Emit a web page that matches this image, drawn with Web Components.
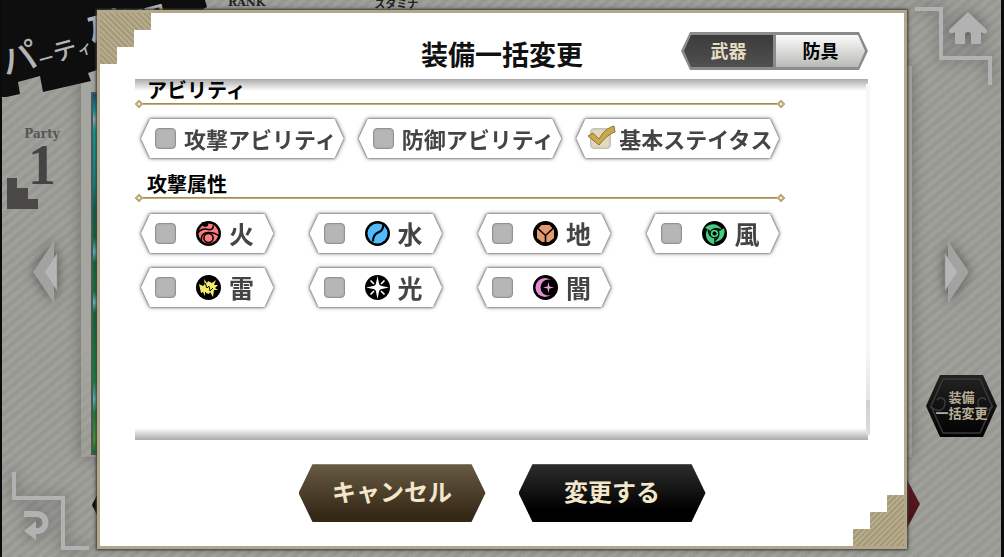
<!DOCTYPE html>
<html lang="ja">
<head>
<meta charset="utf-8">
<meta name="viewport" content="width=device-width, initial-scale=1">
<title>装備一括変更</title>
<style>
  html, body { margin: 0; min-height: 100%; }
  body { background: #0b0b0b; font-family: "Noto Sans CJK JP", "Noto Sans", sans-serif; font-weight: 700; color: #000; }
</style>
</head>
<body>
<party-screen>
  <gear-dialog slot="dialog">
    <span slot="title">装備一括変更</span>
    <mode-toggle slot="mode"></mode-toggle>
    <filter-section columns="3" heading="アビリティ">
      <filter-chip>攻撃アビリティ</filter-chip>
      <filter-chip>防御アビリティ</filter-chip>
      <filter-chip checked>基本ステイタス</filter-chip>
    </filter-section>
    <filter-section columns="4" heading="攻撃属性">
      <filter-chip element="fire">火</filter-chip>
      <filter-chip element="water">水</filter-chip>
      <filter-chip element="earth">地</filter-chip>
      <filter-chip element="wind">風</filter-chip>
      <filter-chip element="thunder">雷</filter-chip>
      <filter-chip element="light">光</filter-chip>
      <filter-chip element="dark">闇</filter-chip>
    </filter-section>
    <hex-button slot="actions" tone="bronze">キャンセル</hex-button>
    <hex-button slot="actions">変更する</hex-button>
  </gear-dialog>
</party-screen>

<script>
const define = (name, html, setup) => {
  const tpl = document.createElement('template');
  tpl.innerHTML = html;
  customElements.define(name, class extends HTMLElement {
    constructor() {
      super();
      this.attachShadow({ mode: 'open' }).append(tpl.content.cloneNode(true));
    }
    connectedCallback() { if (setup) setup(this, this.shadowRoot); }
  });
};

const blade = '<path d="M3 7C8 1.500 16.500 2 20 9c-3-2-6-2.500-9-1.500 3 0 5 1 6.500 2.500-3-1.500-6-1.500-8.500.5C6.500 8.500 5 7.500 3 7z"/>';
const ICONS = {
  fire: `<circle cx="12.500" cy="12.500" r="10" fill="#ff7b80"/>
    <path d="M6 1c-1 4 2 5.500 5 4.500C12.500 5 12.500 3 12 1z"/>
    <path d="M2 12c2-4 7-4.500 10-3.500 4 .5 5.500-1 5-4" fill="none" stroke="#000" stroke-width="1.600"/>
    <path d="M6 22c-2-7 1-10.500 6.500-10.500 5 0 8.500 1.500 11 4" fill="none" stroke="#000" stroke-width="1.600"/>
    <circle cx="12.500" cy="17" r="4.600" fill="#ff7b80" stroke="#000" stroke-width="1.600"/>`,
  water: `<circle cx="12.500" cy="12.500" r="10" fill="#4fbcff"/><path d="M18.500 4c-1 5-2 6-5.500 7.500S8 15 8 20.500" fill="none" stroke="#000" stroke-width="2.200"/>`,
  earth: `<path fill="#e39a70" d="M8.500 4h8L21 9v8l-5 4H9l-5-4V9z"/><path d="M5 7.500l7.500 7 7.500-7M12.500 14.500V22" fill="none" stroke="#000" stroke-width="1.600"/>`,
  wind: `<g fill="#45cc80">${[0, 120, 240].map(a => `<g transform="rotate(${a} 12.500 12.500)">${blade}</g>`).join('')}</g>
    <circle cx="12.500" cy="12.500" r="4.400" fill="#45cc80" stroke="#000" stroke-width="1.200"/><circle cx="12.500" cy="12.500" r="2"/>`,
  thunder: `<path fill="#f3ea6c" d="M8 4l3 4 1-2 4 2 4-3-2 5 4 0-3 3 3 2-4 0-1 7-3-5-1 2-3-1z"/><path fill="#f3ea6c" d="M3 9l4 2 2-2 1 5 2-2 0 5-3 0 0 4-2-4-2 1z"/>
    <path d="M9 8l2 5 2-2 1 5 3-3" fill="none" stroke="#000" stroke-width="1"/>`,
  light: `<path fill="#fff" d="M12.500 1l1.700 8.300 1.500 1.500 8.300 1.700-8.300 1.700-1.500 1.500L12.500 24l-1.700-8.300-1.500-1.500L1 12.500l8.300-1.700 1.500-1.500z"/>
    <path d="M5.500 5.500L9 9M19.500 5.500L16 9M5.500 19.500L9 16M19.500 19.500L16 16" stroke="#fff" stroke-width="1.600"/>`,
  dark: `<circle cx="12" cy="12.500" r="9.500" fill="#e88bd8"/><circle cx="15.500" cy="12.500" r="8" fill="#000"/>
    <path fill="#f09be0" d="M15.500 7l1 4.500 4.500 1-4.500 1-1 4.500-1-4.500-4.500-1 4.500-1z"/>`
};

define('element-icon', `
  <style>
    :host { display: block; width: 25px; height: 25px; flex: none; }
    svg { display: block; width: 100%; height: 100%; }
  </style>
  <svg viewBox="0 0 25 25" aria-hidden="true"></svg>`,
  (host, root) => {
    root.querySelector('svg').innerHTML = '<circle cx="12.500" cy="12.500" r="12.500"/>' + ICONS[host.getAttribute('name')];
  });

define('filter-chip', `
  <style>
    :host { display: block; min-width: 0; filter: drop-shadow(0 0 1px #555) drop-shadow(0 0 2px #888); }
    label {
      display: flex; align-items: center; gap: 8px; height: 39px; padding-left: 14px; box-sizing: border-box;
      background: #fff; color: #444; font-size: 22px; line-height: 32px; white-space: nowrap; cursor: pointer;
      clip-path: polygon(0 50%, 9px 0, calc(100% - 9px) 0, 100% 50%, calc(100% - 9px) 100%, 9px 100%);
    }
    .box { position: relative; flex: none; width: 21px; height: 21px; }
    .text { padding-bottom: 2px; }
    input {
      appearance: none; display: block; width: 21px; height: 21px; margin: 0; box-sizing: border-box;
      background: #b6b6b6; border: 1px solid #929292; border-radius: 4px; box-shadow: inset 0 0 2px #999;
    }
    input:checked { background: #e2d9c2; border-color: #c6c0b2; box-shadow: inset 0 0 2px #bbb09a; }
    svg { position: absolute; left: -3px; top: -3px; width: 29px; height: 24px; display: none; pointer-events: none; }
    input:checked + svg { display: block; }
    element-icon { margin-left: 12px; }
    :host([element]) label { font-size: 25px; }
  </style>
  <label>
    <span class="box">
      <input type="checkbox">
      <svg viewBox="0 0 29 24" aria-hidden="true"><path d="M1 11l5-3 6 6C16 7 20 3 27 1l1 6c-6 2-10 6-16 13z" fill="#c9a94c" stroke="#8d7434" stroke-width="1"/></svg>
    </span>
    <span class="text"><slot></slot></span>
  </label>`,
  (host, root) => {
    root.querySelector('input').checked = host.hasAttribute('checked');
    if (host.hasAttribute('element') && !root.querySelector('element-icon')) {
      const icon = document.createElement('element-icon');
      icon.setAttribute('name', host.getAttribute('element'));
      root.querySelector('.box').after(icon);
    }
  });

define('filter-section', `
  <style>
    :host { display: block; }
    h2 { margin: 0; padding-left: 12px; font-size: 20px; line-height: 22px; font-weight: 700; }
    .rule { display: flex; align-items: center; height: 6px; }
    .rule::before, .rule::after {
      content: ""; width: 6px; height: 6px; box-sizing: border-box; border: 1px solid #a38c4b; rotate: 45deg;
      background: #fff; box-shadow: inset 0 0 0 1px #b9a468; margin: 0 1px;
    }
    .rule i { flex: 1; height: 2px; background: linear-gradient(#a38c4b 50%, #bfae7e 50%); }
    .grid { display: grid; margin: 12px 6px 15px; row-gap: 15px; }
    :host([columns="3"]) .grid { grid-template-columns: repeat(3, 1fr); column-gap: 15px; }
    :host([columns="4"]) .grid { grid-template-columns: repeat(4, 1fr); column-gap: 36px; margin-top: 13px; }
  </style>
  <section>
    <h2></h2>
    <div class="rule"><i></i></div>
    <div class="grid"><slot></slot></div>
  </section>`,
  (host, root) => { root.querySelector('h2').textContent = host.getAttribute('heading'); });

define('mode-toggle', `
  <style>
    :host {
      display: flex; width: 187px; height: 38px; padding: 3px; box-sizing: border-box; gap: 3px; background: #8b8b8b;
      clip-path: polygon(0 50%, 9px 0, calc(100% - 9px) 0, 100% 50%, calc(100% - 9px) 100%, 9px 100%);
    }
    button { flex: 1; border: 0; padding: 0 0 2px; margin: 0; font: inherit; font-size: 18px; line-height: 30px; color: #000; cursor: pointer;
      background: linear-gradient(#fbfbfb, #b9b9b6);
      clip-path: polygon(0 0, calc(100% - 7px) 0, 100% 50%, calc(100% - 7px) 100%, 0 100%); }
    button[aria-pressed="true"] { background: linear-gradient(#3b3b3b, #505050); color: #e6dcc4;
      clip-path: polygon(0 50%, 7px 0, 100% 0, 100% 100%, 7px 100%); }
  </style>
  <button type="button" aria-pressed="true">武器</button>
  <button type="button" aria-pressed="false">防具</button>`);

define('hex-button', `
  <style>
    :host { display: block; width: 187px; }
    button {
      display: block; width: 100%; height: 58px; padding: 0 0 4px; border: 0; font: inherit; font-size: 24px; line-height: 36px;
      color: #f3e7cb; cursor: pointer; background: linear-gradient(#555 0 1px, #2c2c2c 1px, #000 80%);
      clip-path: polygon(0 50%, 14px 0, calc(100% - 14px) 0, 100% 50%, calc(100% - 14px) 100%, 14px 100%);
    }
    :host([tone="bronze"]) button { background: linear-gradient(#8b8168 0 1px, #665a44 1px, #352816 90%); }
  </style>
  <button type="button"><slot></slot></button>`);

define('gear-dialog', `
  <style>
    :host { display: block; }
    .frame {
      position: relative; display: flex; flex-direction: column; box-sizing: border-box; min-height: calc(100vh - 18px);
      background: #fff; border: 3px solid #b3a689; box-shadow: 0 0 2px 1px #444, 0 0 6px rgba(0,0,0,.4);
    }
    .stairs { position: absolute; width: 51px; height: 51px;
      background: repeating-linear-gradient(135deg, #b6ab8c 0 2px, #a59a78 2px 4px); }
    .tl { left: 0; top: 0; background: repeating-linear-gradient(45deg, #b6ab8c 0 2px, #a59a78 2px 4px);
      clip-path: polygon(0 0, 100% 0, 100% 17px, 34px 17px, 34px 34px, 17px 34px, 17px 100%, 0 100%); }
    .br { right: 0; bottom: 0; clip-path: polygon(100% 100%, 0 100%, 0 34px, 17px 34px, 17px 17px, 34px 17px, 34px 0, 100% 0); }
    header { display: grid; grid-template-columns: 1fr auto 1fr; padding: 19px 36px 8px; height: 39px; }
    h1 { grid-column: 2; align-self: end; margin: 0; font-size: 27px; line-height: 34px; font-weight: 700; color: #111; }
    .mode { justify-self: end; }
    .scroller { position: relative; z-index: 0; flex: 1; margin: 0 36px 0 35px; box-sizing: border-box; }
    .scroller::before, .scroller::after { content: ""; position: absolute; left: 0; right: 0; height: 12px; z-index: -1; }
    .scroller::before { top: 0; background: linear-gradient(#aaa, #fff); }
    .scroller::after { bottom: 0; background: linear-gradient(#fff, #aaa); }
    .list { display: block; margin-right: 83px; }
    .bar { position: absolute; right: -2px; top: 5px; bottom: 5px; width: 4px;
      background: linear-gradient(#f7f7f7 76%, #e4e4e4 90%, #d0d0d0 90%, #ddd); }
    footer { display: flex; justify-content: center; gap: 33px; padding: 24px 0; }
  </style>
  <div class="frame" role="dialog" aria-labelledby="t">
    <div class="stairs tl"></div>
    <div class="stairs br"></div>
    <header><h1 id="t"><slot name="title"></slot></h1><div class="mode"><slot name="mode"></slot></div></header>
    <div class="scroller"><div class="list"><slot></slot></div><div class="bar"></div></div>
    <footer><slot name="actions"></slot></footer>
  </div>`);

define('page-arrow', `
  <style>
    :host { display: block; width: 26px; height: 62px; }
    button { display: block; padding: 0; border: 0; background: none; cursor: pointer; }
    svg { display: block; width: 26px; height: 62px; overflow: visible; filter: drop-shadow(0 0 6px rgba(0,0,0,.5)); }
    :host([dir="rtl"]) svg { rotate: 180deg; }
  </style>
  <button type="button" aria-label="ページ送り"><svg viewBox="0 0 26 62"><path d="M4 0l21 31L4 62z" fill="#a2a2a0"/><path d="M1 12.500l13 18.500L1 49.500z" fill="#b6b6b6" stroke="#959593" stroke-width=".6"/></svg></button>`);

define('corner-link', `
  <style>
    :host { display: block; width: 78px; height: 78px; }
    a { display: block; }
    svg { display: block; width: 78px; height: 78px; overflow: visible; filter: drop-shadow(0 0 7px rgba(0,0,0,.4)); }
  </style>
  <a href="#"><svg viewBox="0 0 78 78"></svg></a>`,
  (host, root) => {
    const home = host.getAttribute('kind') === 'home';
    root.querySelector('a').setAttribute('aria-label', home ? 'ホーム' : '戻る');
    root.querySelector('svg').innerHTML = home
      ? '<path d="M0 2h26v49h49v27" fill="none" stroke="#b2b2b2" stroke-width="4"/><path d="M53 5l18 17q2 2 0 4-2 1-5-1v12H56v-9a3 3 0 0 0-6 0v9H40V25q-3 2-5 1-2-2 0-4z" fill="#b2b2b2"/>'
      : '<path d="M2 0v26h49v50h26" fill="none" stroke="#b2b2b2" stroke-width="4"/><path d="M12 42h13a8 8 0 0 1 0 17h-4" fill="none" stroke="#b2b2b2" stroke-width="6"/><path d="M12 59l12-10v19z" fill="#b2b2b2"/>';
  });

define('batch-button', `
  <style>
    :host { display: block; width: 71px; }
    button {
      position: relative; z-index: 0; display: block; width: 71px; height: 62px; padding: 0 0 2px; border: 0; font: inherit; cursor: pointer;
      font-size: 13px; line-height: 16px; color: #b9ae98; background: none; white-space: nowrap;
    }
    svg { position: absolute; inset: 0; width: 71px; height: 62px; z-index: -1; }
  </style>
  <button type="button">
    <svg viewBox="0 0 71 62" aria-hidden="true">
      <defs><linearGradient id="g" x2="0" y2="1"><stop stop-color="#222"/><stop offset="1" stop-color="#020202"/></linearGradient></defs>
      <path d="M0 31L14 0h43l14 31-14 31H14z" fill="url(#g)"/>
      <path d="M5 31L17 4h37l12 27-12 27H17z" fill="none" stroke="#393939" stroke-width="1.500"/>
      <path d="M4 31c8 8 14 4 15-2s-5-8-8-4M67 31c-8 8-14 4-15-2s5-8 8-4" fill="none" stroke="#3b3b3b" stroke-width="1.500"/>
    </svg>装備<br>一括変更
  </button>`);

define('party-screen', `
  <style>
    :host { display: block; }
    .stage {
      position: relative; display: grid; grid-template-columns: 95px 1fr 94px; min-height: 100vh; box-sizing: border-box;
      border: solid #0b0b0d; border-width: 0 3px 0 2px; overflow: hidden;
      background: repeating-linear-gradient(140deg, #a0a09a 0 4px, #989893 4px 8px);
    }
    .rail { position: relative; z-index: 1; display: flex; flex-direction: column; box-sizing: border-box; }
    .left { align-items: flex-start; padding: 126px 0 7px 10px; }
    .right { align-items: flex-start; padding: 7px 0 0 8px; }
    .party { width: 60px; height: 63px; text-align: center; color: #555; font-family: "DejaVu Serif", serif; font-size: 12px; line-height: 17px; font-weight: 700; }
    .party b { display: block; font: 700 56px/44px "Liberation Serif", serif; color: #444; }
    .steps { position: absolute; left: 5px; top: 178px; width: 31px; height: 31px; background: #4b4947;
      clip-path: polygon(0 0, 10px 0, 10px 10px, 21px 10px, 21px 21px, 31px 21px, 31px 31px, 0 31px); }
    .left page-arrow { margin: 52px 0 0 20px; }
    .left corner-link { margin-top: auto; }
    .right page-arrow { margin: 156px 0 0 29px; }
    .right batch-button { margin: 72px 0 0 11px; }
    .panel { margin: 66px -5px 100px -16px; background: linear-gradient(#a6a6a1 70%, transparent);
      box-shadow: 0 0 14px rgba(0,0,0,.3); padding: 26px 10px 0; }
    .art { height: 359px; border: 2px solid #555; box-sizing: content-box;
      background: linear-gradient(#0a4f86, #0aa6a0 5%, #9ab 7%, #0aa6a0 10%, #0a8f88 25%, #066b50 32%, #06733a 40%, #5bc0c4 44%, #06733a 47%, #08803e 55%, #6cc4c0 58%, #06733a 61%, #0a8f46 80%, #5bb8b8 85%, #108a3c 89%, #4a9a35 96%, #0c7a30); }
    .stats { position: absolute; left: 226px; right: 0; top: -5px; display: flex; gap: 109px; font-size: 11px; line-height: 16px; color: #222; }
    .stats span:first-child { font-family: "DejaVu Serif", serif; }
    .banner { position: absolute; left: 0; top: 0; width: 206px; height: 97px; z-index: 2; }
    .banner svg { display: block; width: 206px; height: 97px; }
    .banner p { position: absolute; left: 7px; top: 34px; margin: 0; display: flex; align-items: baseline; rotate: -15deg;
      transform-origin: 0 100%; color: #b4b4b4; line-height: 44px; white-space: nowrap; font-weight: 500; }
    .l { font-size: 36px; } .m { font-size: 24px; } .s { font-size: 16px; } .x { font-size: 44px; }
    .gem { position: absolute; z-index: 2; }
    .gem.dark { left: 90px; bottom: 42px; width: 10px; height: 20px; background: #0c0c0c; clip-path: polygon(0 50%, 50% 0, 50% 100%); }
    .gem.red { right: 81px; bottom: 25px; width: 15px; height: 56px; background: linear-gradient(#5c1c24, #4a1219); clip-path: polygon(0 0, 100% 50%, 0 100%); }
    .over { position: absolute; z-index: 3; inset: 10px 94px auto 95px; }
  </style>
  <div class="stage">
    <div class="rail left">
      <div class="party">Party<b>1</b></div>
      <div class="steps"></div>
      <page-arrow dir="rtl"></page-arrow>
      <corner-link kind="back"></corner-link>
    </div>
    <div class="panel"><div class="art"></div></div>
    <div class="rail right">
      <corner-link kind="home"></corner-link>
      <page-arrow></page-arrow>
      <batch-button></batch-button>
    </div>
    <div class="stats"><span>RANK</span><span>スタミナ</span></div>
    <div class="banner">
      <svg viewBox="0 0 206 97" aria-hidden="true"><path d="M0 0h203l2 7-110 63-9 3 3 8-48 11-3-16-22 6 2 12-18 4z" fill="#0e0e0e"/></svg>
      <p><span class="l">パ</span><span class="s">ー</span><span class="m">テ</span><span class="s">ィ</span><span class="x">確</span><span class="l">認</span></p>
    </div>
    <div class="gem dark"></div>
    <div class="gem red"></div>
    <div class="over"><slot name="dialog"></slot></div>
  </div>`);
</script>
</body>
</html>
